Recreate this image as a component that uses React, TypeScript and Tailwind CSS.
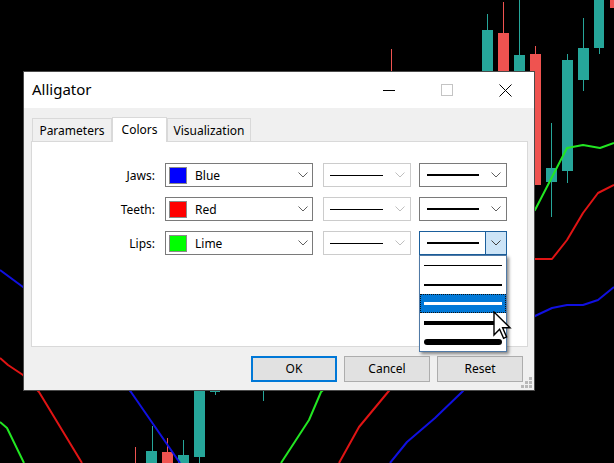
import React from 'react';

const FONT = { fontFamily: '"Noto Sans", "Open Sans", sans-serif' };

const Chevron: React.FC<{ color?: string }> = ({ color = '#606060' }) => (
  <svg width="10" height="6" viewBox="0 0 10 6">
    <path d="M0.5 0.5 L5 5 L9.5 0.5" fill="none" stroke={color} strokeWidth="1" />
  </svg>
);

const ColorCombo: React.FC<{ swatch: string; name: string }> = ({ swatch, name }) => (
  <div className="ml-[10px] w-[148px] h-[24px] border border-[#7a7a7a] bg-white flex items-center">
    <div className="ml-[3px] w-[18px] h-[17px] border border-[#8a8a8a]" style={{ backgroundColor: swatch }} />
    <span className="ml-[8px] flex-1 text-[12px] text-black translate-y-px">{name}</span>
    <div className="mr-[4px]"><Chevron /></div>
  </div>
);

const StyleCombo: React.FC = () => (
  <div className="ml-[10px] w-[88px] h-[24px] border border-[#cccccc] bg-white flex items-center">
    <div className="ml-[6px] w-[53px] h-px bg-black" />
    <div className="ml-auto mr-[5px]"><Chevron color="#bfbfbf" /></div>
  </div>
);

const WidthCombo: React.FC<{ open?: boolean }> = ({ open }) => (
  <div className={`relative ml-[8px] w-[88px] h-[24px] border bg-white flex items-center ${open ? 'border-[#1b5f9c]' : 'border-[#7a7a7a]'}`}>
    <div className="ml-[7px] w-[52px] h-[2px] bg-black" />
    {open ? (
      <div className="ml-auto h-full w-[21px] border-l border-[#1b5f9c] bg-[#cce4f7] flex items-center justify-center">
        <Chevron color="#404040" />
      </div>
    ) : (
      <div className="ml-auto mr-[5px]"><Chevron /></div>
    )}
    {open && (
      <div className="absolute left-[-1px] top-[23px] w-[88px] border border-[#4f79a6] bg-white shadow-[2px_2px_3px_rgba(0,0,0,0.45)] z-20">
        {[1, 2, 3, 4, 5].map(w => (
          <div
            key={w}
            className={`h-[19px] flex items-center ${w === 3 ? 'bg-[#0078d7] border border-dotted border-[#111]' : ''}`}
          >
            <div
              className={`${w === 3 ? 'ml-[3px]' : 'ml-[4px]'} w-[78px] ${w === 3 ? 'bg-white' : 'bg-black'} ${w === 5 ? 'rounded-full' : ''}`}
              style={{ height: w === 5 ? 6 : w }}
            />
          </div>
        ))}
      </div>
    )}
  </div>
);

const Row: React.FC<{ label: string; swatch: string; name: string; open?: boolean }> = ({ label, swatch, name, open }) => (
  <div className="flex items-center h-[24px]">
    <div className="w-[123px] text-right text-[12px] text-black translate-y-px">{label}</div>
    <ColorCombo swatch={swatch} name={name} />
    <StyleCombo />
    <WidthCombo open={open} />
  </div>
);

const Chart: React.FC = () => (
  <svg className="absolute inset-0" width="614" height="463" viewBox="0 0 614 463">
    <rect width="614" height="463" fill="#000" />
    {/* candles */}
    <g fill="#26a69a" stroke="#26a69a">
      <line x1="487.5" y1="14" x2="487.5" y2="40" />
      <rect x="482" y="30" width="11" height="45" stroke="none" />
      <line x1="519.5" y1="0" x2="519.5" y2="60" />
      <rect x="514" y="55" width="11" height="20" stroke="none" />
      <line x1="551.5" y1="123" x2="551.5" y2="217" />
      <rect x="546" y="168" width="11" height="14" stroke="none" />
      <line x1="567.5" y1="54" x2="567.5" y2="183" />
      <rect x="562" y="60" width="11" height="111" stroke="none" />
      <line x1="583.5" y1="18" x2="583.5" y2="91" />
      <rect x="578" y="48" width="11" height="32" stroke="none" />
      <line x1="599.5" y1="0" x2="599.5" y2="54" />
      <rect x="594" y="0" width="10" height="48" stroke="none" />
      <line x1="152.5" y1="426" x2="152.5" y2="463" />
      <rect x="146" y="451" width="11" height="12" stroke="none" />
      <line x1="183.5" y1="440" x2="183.5" y2="463" />
      <rect x="178" y="455" width="11" height="8" stroke="none" />
      <line x1="199.5" y1="385" x2="199.5" y2="463" />
      <rect x="194" y="385" width="11" height="72" stroke="none" />
      <line x1="215.5" y1="385" x2="215.5" y2="395" />
      <rect x="210" y="385" width="10" height="7" stroke="none" />
      <line x1="263.5" y1="385" x2="263.5" y2="401" />
    </g>
    <g fill="#ef5350" stroke="#ef5350">
      <line x1="391.5" y1="49" x2="391.5" y2="75" />
      <line x1="503.5" y1="2" x2="503.5" y2="40" />
      <rect x="498" y="33" width="11" height="42" stroke="none" />
      <line x1="535.5" y1="46" x2="535.5" y2="60" />
      <rect x="530" y="54" width="11" height="131" stroke="none" />
      <rect x="610" y="0" width="11" height="8" stroke="none" />
      <line x1="135.5" y1="447" x2="135.5" y2="463" />
      <line x1="167.5" y1="438" x2="167.5" y2="463" />
      <rect x="162" y="452" width="11" height="11" stroke="none" />
    </g>
    {/* alligator lines */}
    <g fill="none" strokeWidth="2" strokeLinejoin="round">
      <polyline stroke="#1010e0" points="0,270 23,287 80,330 131,392 180,463" />
      <polyline stroke="#1010e0" points="614,287 598,300 583,305 567,305 552,308 535,316 500,350 462,392 435,418 407,442 390,463" />
      <polyline stroke="#e01414" points="0,358 8,365 23,375 39,392 82,463" />
      <polyline stroke="#e01414" points="614,185 598,193 583,213 567,240 552,259 535,259 450,320 388,392 359,427 339,463" />
      <polyline stroke="#22e622" points="0,422 7,428 24,463" />
      <polyline stroke="#22e622" points="614,143 600,148 583,145 567,148 535,210 400,320 321,392 309,420 281,463" />
    </g>
  </svg>
);

const Cursor: React.FC = () => (
  <svg className="absolute left-[493px] top-[311px] z-30" width="20" height="32" viewBox="0 0 20 32">
    <path
      d="M1 1 L1 24 L6.6 18.2 L10.6 27.4 L13.6 26 L9.6 16.8 L17 16.8 Z"
      fill="#fff"
      stroke="#000"
      strokeWidth="1.4"
      strokeLinejoin="miter"
    />
  </svg>
);

const Grip: React.FC = () => (
  <svg className="absolute right-[2px] bottom-[2px]" width="11" height="11" viewBox="0 0 11 11">
    <g fill="#b8b8b8">
      <rect x="8" y="0" width="3" height="3" />
      <rect x="4" y="4" width="3" height="3" />
      <rect x="8" y="4" width="3" height="3" />
      <rect x="0" y="8" width="3" height="3" />
      <rect x="4" y="8" width="3" height="3" />
      <rect x="8" y="8" width="3" height="3" />
    </g>
  </svg>
);

const App: React.FC = () => {
  return (
    <div className="relative w-[614px] h-[463px] overflow-hidden bg-black" style={FONT}>
      <Chart />

      <div className="absolute left-[23px] top-[71px] w-[512px] h-[320px] border border-[#4a4a4a] flex flex-col z-10">
        {/* title bar */}
        <div className="h-[36px] bg-white flex items-center">
          <span className="ml-[8px] text-[15px] text-black flex-1 -translate-y-px">Alligator</span>
          <div className="w-[58px] h-full flex items-center justify-center">
            <div className="w-[12px] h-px bg-black" />
          </div>
          <div className="w-[58px] h-full flex items-center justify-center">
            <div className="w-[12px] h-[12px] border border-[#c4c4c4]" />
          </div>
          <div className="w-[58px] h-full flex items-center justify-center">
            <svg width="13" height="13" viewBox="0 0 13 13">
              <path d="M0.5 0.5 L12.5 12.5 M12.5 0.5 L0.5 12.5" stroke="#000" strokeWidth="1" />
            </svg>
          </div>
        </div>

        {/* body */}
        <div className="relative flex-1 bg-[#f0f0f0] pl-[7px] pr-[6px] flex flex-col">
          <div className="mt-[9px] ml-[1px] h-[24px] flex items-end relative z-10 text-[12px] text-black">
            <div className="h-[23px] w-[80px] border border-b-0 border-[#d9d9d9] bg-[#f0f0f0] flex items-center justify-center pt-[2px]">
              Parameters
            </div>
            <div className="h-[25px] w-[55px] -mb-px border border-b-0 border-[#d9d9d9] bg-white flex items-start justify-center pt-[3px]">
              Colors
            </div>
            <div className="h-[23px] w-[84px] border border-b-0 border-[#d9d9d9] bg-[#f0f0f0] flex items-center justify-center pt-[2px]">
              Visualization
            </div>
          </div>

          <div className="h-[206px] border border-[#d9d9d9] bg-white pt-[21px] flex flex-col gap-[10px]">
            <Row label="Jaws:" swatch="#0000ff" name="Blue" />
            <Row label="Teeth:" swatch="#ff0000" name="Red" />
            <Row label="Lips:" swatch="#00ff00" name="Lime" open />
          </div>

          <div className="mt-[9px] pr-[5px] flex justify-end gap-[7px] text-[12px] text-black">
            <button className="w-[86px] h-[26px] border-2 border-[#0078d7] bg-[#e1e1e1]">OK</button>
            <button className="w-[86px] h-[26px] border border-[#adadad] bg-[#e1e1e1]">Cancel</button>
            <button className="w-[86px] h-[26px] border border-[#adadad] bg-[#e1e1e1]">Reset</button>
          </div>

          <Grip />
        </div>
      </div>

      <Cursor />
    </div>
  );
};

export default App;
